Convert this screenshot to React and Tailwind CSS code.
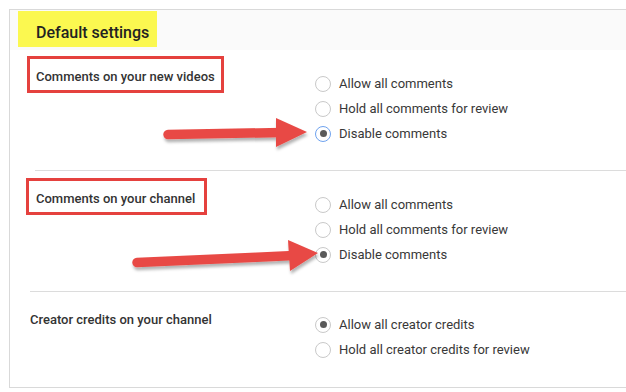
import React from "react";

function Radio({ checked, blue }) {
  return (
    <span
      className={`flex h-[16px] w-[16px] shrink-0 items-center justify-center rounded-full border ${
        blue ? "border-[#6fa3ef]" : "border-[#c9c9c9]"
      } bg-white`}
    >
      {checked && <span className="h-[7px] w-[7px] rounded-full bg-[#5a5a5a]" />}
    </span>
  );
}

function Option({ label, checked, blue }) {
  return (
    <div className="flex h-[25px] items-center gap-[8px]">
      <Radio checked={checked} blue={blue} />
      <span className="text-[13px] text-[#383838] leading-none">{label}</span>
    </div>
  );
}

export default function App() {
  return (
    <div
      className="relative h-[392px] w-[626px] overflow-hidden bg-white"
      style={{ fontFamily: "Roboto, 'Liberation Sans', sans-serif" }}
    >
      <div className="ml-[9px] mt-[9px] border-b border-l border-t border-[#d9d9d9]">
        {/* header */}
        <div className="h-[40px] bg-[#fafafa] pl-[8px] pt-[1px]">
          <div className="flex h-[36px] w-[139px] items-center bg-[#fbf850] pl-[18px] pt-[7px]">
            <span className="text-[16px] font-medium text-[#222]">Default settings</span>
          </div>
        </div>

        {/* section 1 */}
        <div className="flex h-[120px]">
          <div className="w-[305px] pl-[17px] pt-[6px]">
            <div className="flex h-[37px] w-[197px] items-center border-[3px] border-[#e5413e] pl-[6px] pt-[4px]">
              <span className="text-[13px] font-medium text-[#333]">Comments on your new videos</span>
            </div>
          </div>
          <div className="pt-[21px]">
            <Option label="Allow all comments" />
            <Option label="Hold all comments for review" />
            <Option label="Disable comments" checked blue />
          </div>
        </div>
        <div className="ml-[25px] border-t border-[#dcdcdc]" />

        {/* section 2 */}
        <div className="flex h-[120px]">
          <div className="w-[305px] pl-[16px] pt-[7px]">
            <div className="flex h-[37px] w-[181px] items-center border-[3px] border-[#e5413e] pl-[7px] pt-[4px]">
              <span className="text-[13px] font-medium text-[#333]">Comments on your channel</span>
            </div>
          </div>
          <div className="pt-[21px]">
            <Option label="Allow all comments" />
            <Option label="Hold all comments for review" />
            <Option label="Disable comments" checked />
          </div>
        </div>
        <div className="ml-[20px] border-t border-[#dcdcdc]" />

        {/* section 3 */}
        <div className="flex h-[95px]">
          <div className="w-[305px] pl-[20px] pt-[15px]">
            <span className="text-[13px] font-medium text-[#333]">Creator credits on your channel</span>
          </div>
          <div className="pt-[20px]">
            <Option label="Allow all creator credits" checked />
            <Option label="Hold all creator credits for review" />
          </div>
        </div>
      </div>

      {/* arrows overlay */}
      <svg
        className="pointer-events-none absolute left-0 top-0"
        width="626"
        height="392"
        viewBox="0 0 626 392"
      >
        <defs>
          <filter id="sh" x="-10%" y="-50%" width="120%" height="200%">
            <feDropShadow dx="1" dy="3" stdDeviation="1.8" floodColor="#000" floodOpacity="0.3" />
          </filter>
        </defs>
        <g fill="#e84a45" stroke="#e84a45" filter="url(#sh)">
          <line x1="168" y1="134.5" x2="282" y2="132.5" strokeWidth="9.5" strokeLinecap="round" />
          <polygon points="276,118 307,132 276,147" stroke="none" />
        </g>
        <g fill="#e84a45" stroke="#e84a45" filter="url(#sh)">
          <line x1="137" y1="262.5" x2="294" y2="255.5" strokeWidth="9.5" strokeLinecap="round" />
          <polygon points="288,240 318,253 290,271" stroke="none" />
        </g>
      </svg>
    </div>
  );
}
